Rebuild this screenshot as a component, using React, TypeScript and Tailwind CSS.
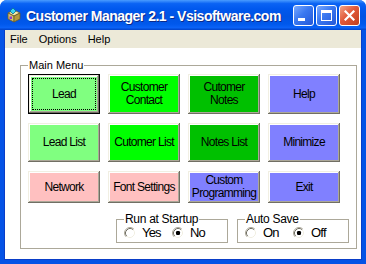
import React from "react";

function Radio({ checked }: { checked: boolean }) {
  return (
    <svg width="12" height="12" viewBox="0 0 12 12" className="shrink-0">
      <circle cx="6" cy="6" r="5" fill="#fff" />
      <path d="M2.11 9.89 A5.5 5.5 0 0 1 9.89 2.11" fill="none" stroke="#aca899" strokeWidth="1" />
      <path d="M9.89 2.11 A5.5 5.5 0 0 1 2.11 9.89" fill="none" stroke="#ffffff" strokeWidth="1" />
      <path d="M2.82 9.18 A4.5 4.5 0 0 1 9.18 2.82" fill="none" stroke="#716f64" strokeWidth="1" />
      <path d="M9.18 2.82 A4.5 4.5 0 0 1 2.82 9.18" fill="none" stroke="#f1efe2" strokeWidth="1" />
      {checked && <rect x="4" y="4" width="4" height="4" rx="1.3" fill="#000" />}
    </svg>
  );
}

function Option({ label, checked }: { label: string; checked: boolean }) {
  return (
    <div className="flex items-center gap-[6px] w-[48px] h-[14px]">
      <Radio checked={checked} />
      <span className="text-[13px] leading-[14px] tracking-[-0.8px] text-black">{label}</span>
    </div>
  );
}

function Btn({
  label,
  color,
  isDefault,
}: {
  label: React.ReactNode;
  color: string;
  isDefault?: boolean;
}) {
  return (
    <div
      className={`relative flex items-center justify-center text-center text-[12px] leading-[13px] tracking-[-0.7px] text-black ${color} ${
        isDefault
          ? "border border-black shadow-[inset_-1px_-1px_#716f64,inset_1px_1px_#f1efe2,inset_-2px_-2px_#aca899,inset_2px_2px_#ffffff]"
          : "shadow-[inset_-1px_-1px_#716f64,inset_1px_1px_#f1efe2,inset_-2px_-2px_#aca899,inset_2px_2px_#ffffff]"
      }`}
    >
      <span>{label}</span>
      {isDefault && <div className="absolute inset-[3px] border border-dotted border-black" />}
    </div>
  );
}

function AppIcon() {
  return (
    <svg width="16" height="16" viewBox="0 0 16 16" className="shrink-0">
      <path d="M2 6 L8 3 L14 6 L8 9 Z" fill="#f3e9a8" stroke="#6b5a2a" strokeWidth="0.8" />
      <path d="M2 6 L8 9 L8 15 L2 12 Z" fill="#d8c46a" stroke="#6b5a2a" strokeWidth="0.8" />
      <path d="M14 6 L8 9 L8 15 L14 12 Z" fill="#b59a3c" stroke="#6b5a2a" strokeWidth="0.8" />
      <path d="M7 1 L10 4 L7 7 L4 4 Z" fill="#3ad3f0" stroke="#0a6f8f" strokeWidth="0.8" />
      <rect x="3.5" y="9.5" width="2.5" height="2.5" fill="#8a3ad0" />
    </svg>
  );
}

export default function App() {
  return (
    <div className="w-[366px] h-[264px] bg-white font-['Liberation_Sans',Arial,sans-serif]">
      <div className="w-[366px] h-[264px] flex flex-col rounded-t-[7px] overflow-hidden bg-[#0553e6]">
        {/* Title bar */}
        <div className="h-[30px] shrink-0 flex items-center pl-[6px] pr-[6px] bg-[linear-gradient(to_bottom,#4a9cff_0%,#0a63f4_12%,#0058ee_30%,#0054e3_55%,#0058ec_80%,#0a62f6_92%,#0042c8_100%)]">
          <AppIcon />
          <div className="ml-[4px] flex-1 text-white font-bold text-[14px] leading-[16px] tracking-[-0.5px] pt-[1px] [text-shadow:1px_1px_#0b2a8a] whitespace-nowrap">
            Customer Manager 2.1 - Vsisoftware.com
          </div>
          <div className="flex gap-[2px]">
            <div className="w-[21px] h-[21px] rounded-[3px] border border-white bg-[linear-gradient(135deg,#78a9ff_0%,#3a78f0_45%,#2458d8_100%)] flex items-end pl-[4px] pb-[4px]">
              <div className="w-[7px] h-[3px] bg-white" />
            </div>
            <div className="w-[21px] h-[21px] rounded-[3px] border border-white bg-[linear-gradient(135deg,#78a9ff_0%,#3a78f0_45%,#2458d8_100%)] flex items-center justify-center">
              <div className="w-[11px] h-[11px] border border-white border-t-[3px]" />
            </div>
            <div className="w-[21px] h-[21px] rounded-[3px] border border-white bg-[linear-gradient(135deg,#f2a487_0%,#e1593a_45%,#c23f1c_100%)] flex items-center justify-center">
              <svg width="11" height="11" viewBox="0 0 11 11">
                <path d="M1.5 1.5 L9.5 9.5 M9.5 1.5 L1.5 9.5" stroke="#fff" strokeWidth="2.2" strokeLinecap="square" />
              </svg>
            </div>
          </div>
        </div>

        {/* Client */}
        <div className="flex-1 flex flex-col mx-[4px] mb-[4px] bg-white border-l border-r border-b border-[#0a3ec8]">
          {/* Menu bar */}
          <div className="h-[18px] shrink-0 flex items-center bg-[#ece9d8] text-[11px] leading-[13px] text-black">
            <span className="pl-[5px] pr-[5px]">File</span>
            <span className="px-[6px]">Options</span>
            <span className="px-[5px]">Help</span>
          </div>

          {/* Content */}
          <div className="flex-1">
            <fieldset className="ml-[15px] mt-[11px] w-[328px] h-[190px] border border-[#aca899] px-[7px]">
              <legend className="px-[1px] text-[11px] leading-[13px] text-black">Main Menu</legend>
              <div className="mt-[2px] grid grid-cols-[repeat(4,72px)] grid-rows-[40px_39px_32px] gap-x-[8px] gap-y-[9px]">
                <Btn label="Lead" color="bg-[#80ff80]" isDefault />
                <Btn label={<>Customer<br />Contact</>} color="bg-[#00ff00]" />
                <Btn label={<>Cutomer<br />Notes</>} color="bg-[#00c000]" />
                <Btn label="Help" color="bg-[#8080ff]" />
                <Btn label="Lead List" color="bg-[#80ff80]" />
                <Btn label="Cutomer List" color="bg-[#00ff00]" />
                <Btn label="Notes List" color="bg-[#00c000]" />
                <Btn label="Minimize" color="bg-[#8080ff]" />
                <Btn label="Network" color="bg-[#ffc0c0]" />
                <Btn label="Font Settings" color="bg-[#ffc0c0]" />
                <Btn label={<>Custom<br />Programming</>} color="bg-[#8080ff]" />
                <Btn label="Exit" color="bg-[#8080ff]" />
              </div>
              <div className="flex ml-[88px] mt-[10px] gap-[9px]">
                <fieldset className="w-[103px] h-[30px] border border-[#aca899] px-[7px]">
                  <legend className="px-[1px] text-[12px] leading-[13px] tracking-[-0.3px] text-black">Run at Startup</legend>
                  <div className="flex">
                    <Option label="Yes" checked={false} />
                    <Option label="No" checked={true} />
                  </div>
                </fieldset>
                <fieldset className="w-[104px] h-[30px] border border-[#aca899] px-[7px]">
                  <legend className="px-[1px] text-[12px] leading-[13px] tracking-[-0.3px] text-black">Auto Save</legend>
                  <div className="flex">
                    <Option label="On" checked={false} />
                    <Option label="Off" checked={true} />
                  </div>
                </fieldset>
              </div>
            </fieldset>
          </div>
        </div>
      </div>
    </div>
  );
}
